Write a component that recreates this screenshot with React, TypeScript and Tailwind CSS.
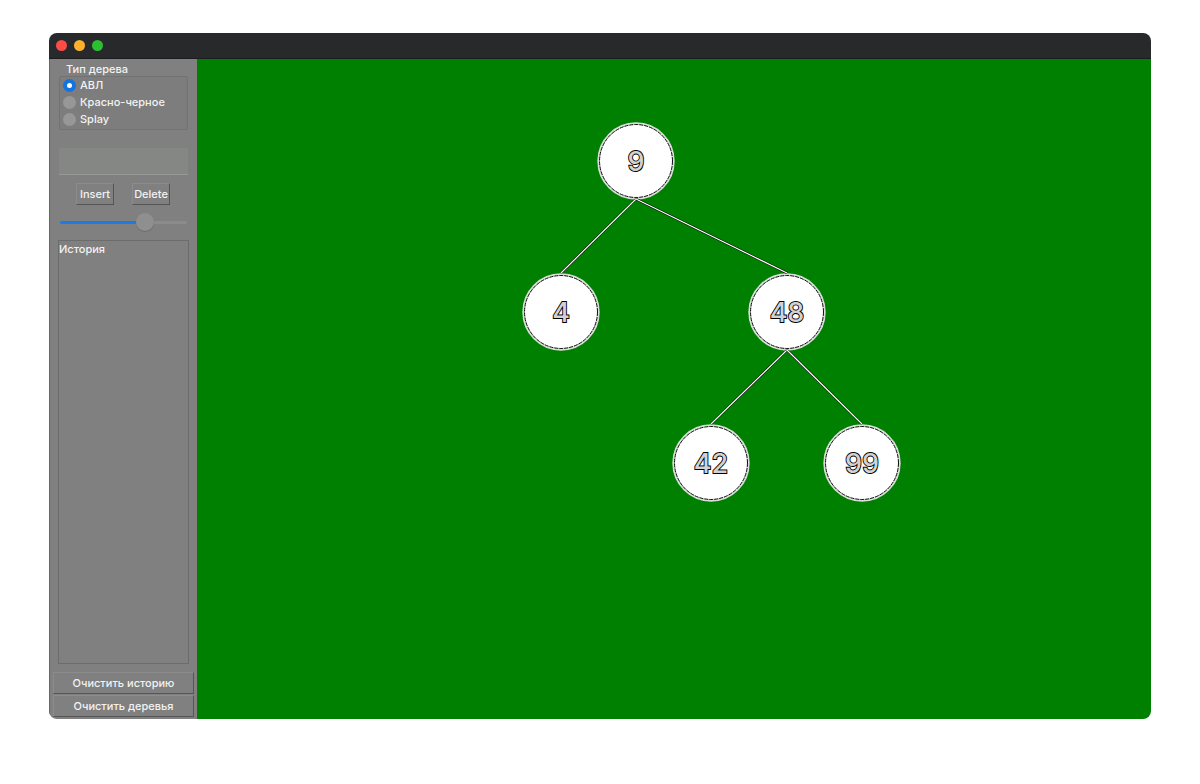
import { useState } from "react";

type TreeNode = { id: number; x: number; y: number };

const nodes: TreeNode[] = [
  { id: 9, x: 439, y: 102 },
  { id: 4, x: 364, y: 253 },
  { id: 48, x: 590, y: 253 },
  { id: 42, x: 514, y: 404 },
  { id: 99, x: 665, y: 404 },
];

const edges: [number, number][] = [
  [9, 4],
  [9, 48],
  [48, 42],
  [48, 99],
];

const find = (id: number) => nodes.find((n) => n.id === id)!;

const kinds = ["АВЛ", "Красно-черное", "Splay"];

const raised =
  "border border-t-[#8c8c8c] border-l-[#8c8c8c] border-r-[#555] border-b-[#555] bg-[#808080]";

function TitleBar() {
  return (
    <header className="flex h-[26px] shrink-0 items-center gap-[7px] border-b border-[#1b1c1d] bg-[#27292b] pl-[7px]">
      <span className="size-[11px] rounded-full bg-[#ff4a46]" />
      <span className="size-[11px] rounded-full bg-[#fdb02b]" />
      <span className="size-[11px] rounded-full bg-[#2ac131]" />
    </header>
  );
}

function Sidebar() {
  const [kind, setKind] = useState("АВЛ");
  const [speed, setSpeed] = useState(70);
  const [value, setValue] = useState("");

  return (
    <aside className="flex w-[148px] shrink-0 flex-col border-l border-[#666] bg-[#808080] pt-[2px] pb-[2px]">
      <div role="radiogroup" aria-labelledby="kind" className="mx-[9px]">
        <div id="kind" className="pl-[7px] leading-[16px]">
          Тип дерева
        </div>
        <div className="-mt-px rounded-xs border border-[#727272] bg-[#7d7d7d] pb-px pl-[3px]">
          {kinds.map((k) => (
            <label key={k} className="flex h-[17px] items-center gap-1">
              <input
                type="radio"
                name="kind"
                checked={kind === k}
                onChange={() => setKind(k)}
                className="size-[13px] appearance-none rounded-full bg-[#979797] checked:border-4 checked:border-[#1672dc] checked:bg-white"
              />
              {k}
            </label>
          ))}
        </div>
      </div>

      <input
        type="text"
        aria-label="Значение"
        value={value}
        onChange={(e) => setValue(e.target.value)}
        className="mx-[9px] mt-[18px] h-[27px] border-b border-[#989898] bg-[#858785] px-1 outline-none"
      />

      <div className="mt-2 flex justify-between pr-[27px] pl-[26px]">
        <button type="button" className={`h-[22px] w-[38px] ${raised}`}>
          Insert
        </button>
        <button type="button" className={`h-[22px] w-[38px] ${raised}`}>
          Delete
        </button>
      </div>

      <div className="relative mx-[10px] mt-2 flex h-[18px] items-center">
        <div className="h-[3px] flex-1 rounded-full bg-[#8b8b8b]">
          <div className="h-full rounded-full bg-[#1a7ae6]" style={{ width: `${speed}%` }} />
        </div>
        <input
          type="range"
          aria-label="Скорость"
          value={speed}
          onChange={(e) => setSpeed(Number(e.target.value))}
          className="absolute inset-0 m-0 h-[18px] w-full appearance-none bg-transparent [&::-webkit-slider-thumb]:size-[18px] [&::-webkit-slider-thumb]:appearance-none [&::-webkit-slider-thumb]:rounded-full [&::-webkit-slider-thumb]:bg-[#8f8f8f] [&::-webkit-slider-thumb]:shadow-[0_1px_1px_#6c6c6c]"
        />
      </div>

      <section className="mx-2 mt-[9px] flex-1 border border-[#6c6c6c]">
        <h2 className="leading-[16px]">История</h2>
      </section>

      <div className="mt-2 mr-[3px] ml-[3px] flex flex-col gap-px">
        <button type="button" className={`h-[22px] ${raised}`}>
          Очистить историю
        </button>
        <button type="button" className={`h-[22px] ${raised}`}>
          Очистить деревья
        </button>
      </div>
    </aside>
  );
}

function TreeCanvas() {
  return (
    <main className="flex min-w-0 flex-1 bg-[#008000]">
      <svg className="w-full flex-1" role="img" aria-label="АВЛ">
        {nodes.map((n) => (
          <g key={n.id}>
            <circle cx={n.x} cy={n.y} r="37.3" fill="#fff" stroke="#d9dfd9" strokeWidth="2.8" />
            <circle
              cx={n.x}
              cy={n.y}
              r="36.5"
              fill="none"
              stroke="#111"
              strokeWidth="1"
              strokeDasharray="4 1"
            />
            <text
              x={n.x}
              y={n.y + 10}
              textAnchor="middle"
              fill="#d2d2d2"
              stroke="#000"
              strokeWidth="1.8"
              paintOrder="stroke"
              className="font-[Inter,sans-serif] text-[27px] font-medium"
            >
              {n.id}
            </text>
          </g>
        ))}
        {edges.map(([a, b]) => {
          const p = find(a);
          const c = find(b);
          return (
            <g key={`${a}-${b}`}>
              <line x1={p.x} y1={p.y + 38} x2={c.x} y2={c.y - 39} stroke="#000" strokeWidth="2.2" />
              <line x1={p.x} y1={p.y + 38} x2={c.x} y2={c.y - 39} stroke="#fff" strokeWidth="1.2" />
            </g>
          );
        })}
      </svg>
    </main>
  );
}

export default function App() {
  return (
    <div className="flex min-h-screen flex-col bg-white px-[49px] pt-[33px] pb-[65px] font-[Inter,sans-serif] text-[11px] font-medium text-[#f2f2f2]">
      <div className="flex flex-1 flex-col overflow-hidden rounded-lg">
        <TitleBar />
        <div className="flex flex-1">
          <Sidebar />
          <TreeCanvas />
        </div>
      </div>
    </div>
  );
}
